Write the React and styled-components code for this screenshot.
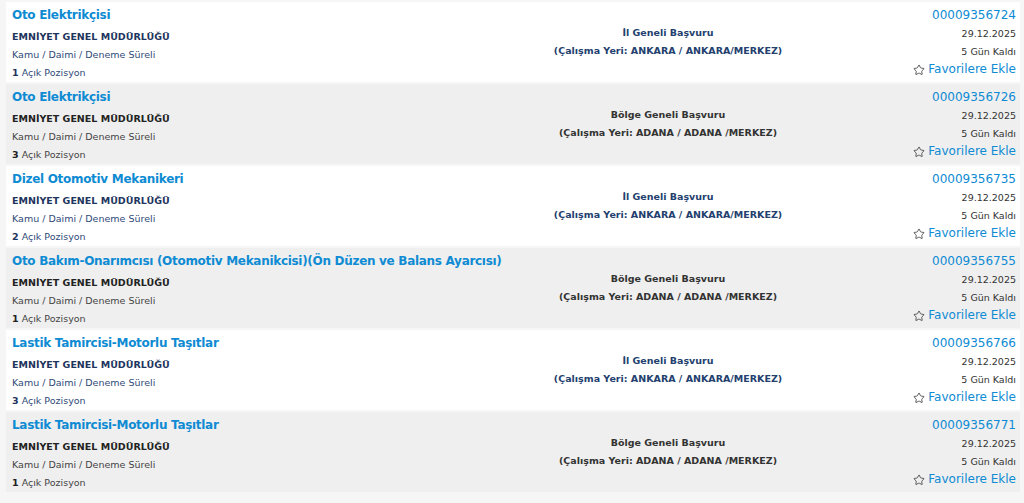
import React from "react";
import styled, { createGlobalStyle } from "styled-components";
import { Star } from "lucide-react";

const GlobalStyle = createGlobalStyle`
  body {
    margin: 0;
    background: #f6f6f6;
    font-family: "DejaVu Sans", Verdana, sans-serif;
  }
`;

const jobs = [
  {
    title: "Oto Elektrikçisi",
    scope: "İl Geneli Başvuru",
    place: "(Çalışma Yeri: ANKARA / ANKARA/MERKEZ)",
    count: 1,
    no: "00009356724",
  },
  {
    title: "Oto Elektrikçisi",
    scope: "Bölge Geneli Başvuru",
    place: "(Çalışma Yeri: ADANA / ADANA /MERKEZ)",
    count: 3,
    no: "00009356726",
  },
  {
    title: "Dizel Otomotiv Mekanikeri",
    scope: "İl Geneli Başvuru",
    place: "(Çalışma Yeri: ANKARA / ANKARA/MERKEZ)",
    count: 2,
    no: "00009356735",
  },
  {
    title:
      "Oto Bakım-Onarımcısı (Otomotiv Mekanikcisi)(Ön Düzen ve Balans Ayarcısı)",
    scope: "Bölge Geneli Başvuru",
    place: "(Çalışma Yeri: ADANA / ADANA /MERKEZ)",
    count: 1,
    no: "00009356755",
  },
  {
    title: "Lastik Tamircisi-Motorlu Taşıtlar",
    scope: "İl Geneli Başvuru",
    place: "(Çalışma Yeri: ANKARA / ANKARA/MERKEZ)",
    count: 3,
    no: "00009356766",
  },
  {
    title: "Lastik Tamircisi-Motorlu Taşıtlar",
    scope: "Bölge Geneli Başvuru",
    place: "(Çalışma Yeri: ADANA / ADANA /MERKEZ)",
    count: 1,
    no: "00009356771",
  },
];

function App() {
  return (
    <>
      <GlobalStyle />
      <List>
        {jobs.map((job, i) => (
          <Row key={job.no} $alt={i % 2 === 1}>
            <Left>
              <Title>{job.title}</Title>
              <Org $alt={i % 2 === 1}>EMNİYET GENEL MÜDÜRLÜĞÜ</Org>
              <Meta $alt={i % 2 === 1}>Kamu / Daimi / Deneme Süreli</Meta>
              <Meta $alt={i % 2 === 1}>
                <b>{job.count}</b> Açık Pozisyon
              </Meta>
            </Left>
            <Middle $alt={i % 2 === 1}>
              <div>{job.scope}</div>
              <div>{job.place}</div>
            </Middle>
            <Right>
              <Number>{job.no}</Number>
              <Small>29.12.2025</Small>
              <Small>5 Gün Kaldı</Small>
              <Fav>
                <Star size={12} strokeWidth={1.6} color="#333" />
                Favorilere Ekle
              </Fav>
            </Right>
          </Row>
        ))}
      </List>
    </>
  );
}

const List = styled.div`
  display: flex;
  flex-direction: column;
  gap: 2px;
  padding: 2px 4px 11px 6px;
`;

const Row = styled.div`
  display: grid;
  grid-template-columns: minmax(0, 1fr) 312px 192px;
  height: 80px;
  box-sizing: border-box;
  padding: 4px 4px 0 6px;
  background: ${(p) => (p.$alt ? "#efefef" : "#ffffff")};
`;

const Left = styled.div`
  display: flex;
  flex-direction: column;
`;

const Title = styled.div`
  font-size: 12px;
  font-weight: bold;
  letter-spacing: -0.3px;
  line-height: 19px;
  color: #0e8bd3;
  margin-bottom: 3px;
  white-space: nowrap;
`;

const Org = styled.div`
  font-size: 9.5px;
  font-weight: bold;
  line-height: 18px;
  color: ${(p) => (p.$alt ? "#222" : "#1e355e")};
`;

const Meta = styled.div`
  font-size: 9.5px;
  line-height: 18px;
  color: ${(p) => (p.$alt ? "#444" : "#2f4a78")};

  b {
    color: ${(p) => (p.$alt ? "#222" : "#1e355e")};
  }
`;

const Middle = styled.div`
  padding-top: 18px;
  text-align: center;
  font-size: 9.5px;
  font-weight: bold;
  line-height: 18px;
  color: ${(p) => (p.$alt ? "#333" : "#23406e")};
`;

const Right = styled.div`
  display: flex;
  flex-direction: column;
  align-items: flex-end;
`;

const Number = styled.div`
  font-size: 12px;
  line-height: 19px;
  color: #0e8bd3;
`;

const Small = styled.div`
  font-size: 9.5px;
  line-height: 18px;
  color: #333;
`;

const Fav = styled.div`
  display: flex;
  align-items: center;
  gap: 3px;
  font-size: 12px;
  line-height: 17px;
  color: #0e8bd3;
  cursor: pointer;
`;

export default App;
